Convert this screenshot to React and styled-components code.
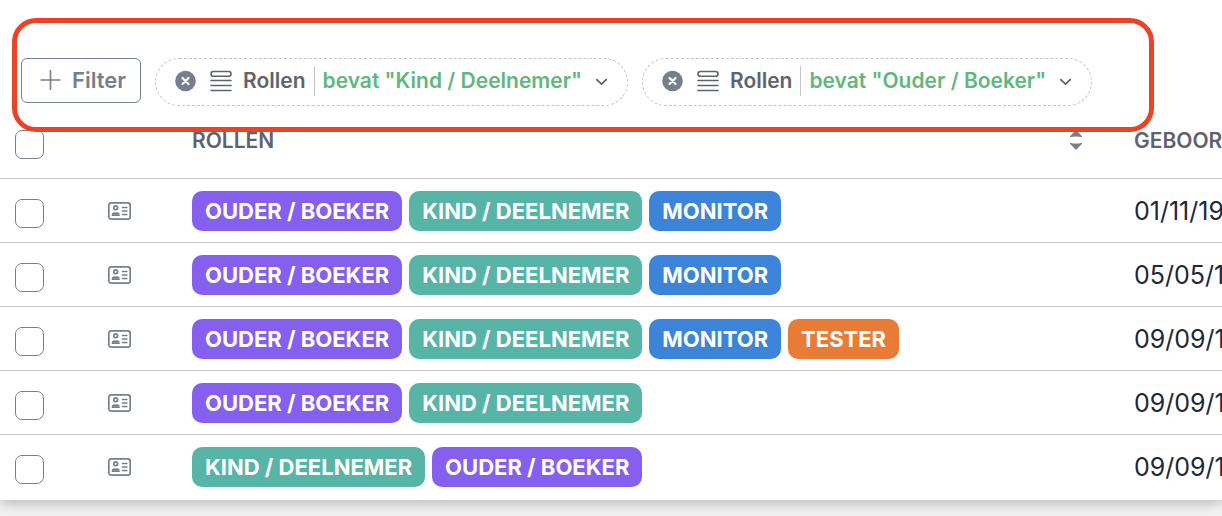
import React, { useState } from 'react';
import styled, { createGlobalStyle } from 'styled-components';

const GlobalStyle = createGlobalStyle`
  * {
    box-sizing: border-box;
  }

  body {
    margin: 0;
    min-height: 100vh;
    background-color: #f4f4f4;
    font-family: Inter, 'Liberation Sans', sans-serif;
  }

  button {
    font-family: inherit;
    background: none;
    border: none;
    padding: 0;
    cursor: pointer;
  }
`;

const Sheet = styled.main`
  position: relative;
  overflow: hidden;
  padding-bottom: 1px;
  background-color: white;
  box-shadow: 0 2px 14px rgba(0, 0, 0, 0.3);
`;

const Toolbar = styled.div`
  display: flex;
  align-items: flex-start;
  gap: 14px;
  padding: 58px 21px 0;
  white-space: nowrap;
`;

const FilterButton = styled.button`
  display: flex;
  align-items: center;
  gap: 10px;
  height: 45px;
  padding: 0 14px 1px 18px;
  border: 1px solid #787f8c;
  border-radius: 6px;
  color: #787f8c;
  font-size: 22px;
  font-weight: 600;
`;

const Pill = styled.div`
  display: flex;
  align-items: center;
  height: 48px;
  padding: 0 19px 2px;
  border: 1px dashed #c4c4c4;
  border-radius: 24px;
`;

const CloseButton = styled.button`
  display: flex;
  margin-right: 14px;
`;

const ConditionButton = styled.button`
  display: flex;
  align-items: center;
  height: 30px;
  color: #5f636d;
  font-size: 21px;
  font-weight: 600;
  line-height: 30px;
`;

const FieldName = styled.span`
  margin-left: 11px;
  padding-right: 8px;
`;

const Condition = styled.span`
  padding: 0 13px 0 8px;
  border-left: 1px solid #c4c4c4;
  color: #63b77c;
`;

// drawn on top of the toolbar
const Highlight = styled.div`
  position: absolute;
  top: 18px;
  left: 12px;
  right: 68px;
  height: 114px;
  border: 5px solid #ec4226;
  border-radius: 24px;
  pointer-events: none;
`;

const Table = styled.table`
  width: 100%;
  table-layout: fixed;
  border-collapse: separate;
  border-spacing: 0;
`;

const Column = styled.col`
  width: ${({ $width }) => $width};
`;

const HeaderCell = styled.th`
  height: 73px;
  padding: 0 0 ${({ $indent }) => ($indent ? '0' : '4px')} ${({ $indent }) => $indent || '0'};
  border-bottom: 1px solid #c8c8c8;
  color: #5f636d;
  font-size: 21px;
  font-weight: 600;
  text-align: left;
  white-space: nowrap;
`;

const HeaderContent = styled.div`
  display: flex;
  align-items: center;
  justify-content: space-between;
  padding-right: 51px;
`;

const Cell = styled.td`
  height: 64px;
  padding: 0 0 0 ${({ $indent }) => $indent || '0'};
  border-bottom: 1px solid #c8c8c8;
  color: #1f2738;
  font-size: 25px;
  white-space: nowrap;

  tr:last-child > & {
    border-bottom-color: white;
  }
`;

const Checkbox = styled.input.attrs({ type: 'checkbox' })`
  appearance: none;
  display: block;
  width: 29px;
  height: 29px;
  margin: 5px 0 0;
  border: 1px solid #787f8c;
  border-radius: 7px;
  background-color: white;

  &:checked {
    background-color: #8560ee;
  }
`;

const IconButton = styled.button`
  display: flex;
`;

const Tags = styled.div`
  display: flex;
  gap: 7px;
`;

const Tag = styled.span`
  height: 40px;
  padding: 0 13px;
  border-radius: 10px;
  background-color: ${({ $color }) => $color};
  color: white;
  font-size: 22px;
  font-weight: 700;
  line-height: 40px;
`;

const PlusIcon = () => (
  <svg width="22" height="22" viewBox="0 0 22 22" fill="none" stroke="#787f8c" strokeWidth="1.6" strokeLinecap="round">
    <path d="M10.5 1.500v19M1 11h19" />
  </svg>
);

const CloseIcon = () => (
  <svg width="21" height="22" viewBox="0 0 21 22">
    <circle cx="10.500" cy="11" r="10.300" fill="#787f8c" />
    <path d="M7.500 8l6 6M13.500 8l-6 6" stroke="white" strokeWidth="2.200" strokeLinecap="round" />
  </svg>
);

const StackIcon = () => (
  <svg width="22" height="22" viewBox="0 0 22 22" fill="none" stroke="#5f636d" strokeWidth="1.6" strokeLinecap="round">
    <rect x="1" y="1.500" width="20" height="4.700" rx="2.300" />
    <path d="M1 10.500h20M1 15.500h20M1 20.500h20" />
  </svg>
);

const ChevronIcon = () => (
  <svg width="13" height="12" viewBox="0 0 13 12" fill="none" stroke="#5f636d" strokeWidth="1.8" strokeLinecap="round" strokeLinejoin="round">
    <path d="M1.800 4.700L6.500 9.200l4.700-4.500" />
  </svg>
);

const SortIcon = () => (
  <svg width="14" height="20" viewBox="0 0 14 20" fill="#787f8c">
    <path d="M7 .5q.5 0 1 .6l4.800 5q.8 1-.2 1Q7 5.800 1.400 7.100q-1 0-.2-1l4.800-5Q6.500.5 7 .5z" />
    <path d="M7 19.500q.5 0 1-.6l4.800-5q.8-1-.2-1Q7 14.200 1.400 12.900q-1 0-.2 1l4.800 5q.5.6 1 .6z" />
  </svg>
);

const CardIcon = () => (
  <svg width="23" height="18" viewBox="0 0 23 18" fill="none" stroke="#787f8c" strokeWidth="1.7" strokeLinecap="round">
    <rect x=".8" y=".8" width="21.400" height="16.400" rx="2.500" />
    <circle cx="7.700" cy="5.800" r="1.900" />
    <path d="M4.500 13.200c0-1.600 1.200-2.200 2-2.200q1.200.6 2.400 0c.8 0 2 .6 2 2.200z" strokeLinejoin="round" />
    <path d="M14.500 5.500h4.300M14.500 9h4.300M14.500 12.500h4.300" />
  </svg>
);

const roles = {
  parent: { label: 'OUDER / BOEKER', color: '#8560ee' },
  child: { label: 'KIND / DEELNEMER', color: '#56b5a7' },
  monitor: { label: 'MONITOR', color: '#3c84d9' },
  tester: { label: 'TESTER', color: '#e87c37' },
};

const people = [
  { id: 1, roles: ['parent', 'child', 'monitor'], birthday: '01/11/19' },
  { id: 2, roles: ['parent', 'child', 'monitor'], birthday: '05/05/1' },
  { id: 3, roles: ['parent', 'child', 'monitor', 'tester'], birthday: '09/09/1' },
  { id: 4, roles: ['parent', 'child'], birthday: '09/09/1' },
  { id: 5, roles: ['child', 'parent'], birthday: '09/09/1' },
];

const App = () => {
  const [filters, setFilters] = useState(['Kind / Deelnemer', 'Ouder / Boeker']);
  const [selected, setSelected] = useState([]);

  const removeFilter = (value) => {
    setFilters(filters.filter((filter) => filter !== value));
  };

  const toggleRow = (id) => {
    setSelected(selected.includes(id) ? selected.filter((item) => item !== id) : [...selected, id]);
  };

  const toggleAll = () => {
    setSelected(selected.length === people.length ? [] : people.map((person) => person.id));
  };

  return (
    <>
      <GlobalStyle />
      <Sheet>
        <Toolbar>
          <FilterButton type="button">
            <PlusIcon />
            Filter
          </FilterButton>
          {filters.map((filter) => (
            <Pill key={filter}>
              <CloseButton type="button" aria-label="Verwijder filter" onClick={() => removeFilter(filter)}>
                <CloseIcon />
              </CloseButton>
              <ConditionButton type="button">
                <StackIcon />
                <FieldName>Rollen</FieldName>
                <Condition>{`bevat "${filter}"`}</Condition>
                <ChevronIcon />
              </ConditionButton>
            </Pill>
          ))}
        </Toolbar>

        <Table>
          <colgroup>
            <Column $width="108px" />
            <Column $width="84px" />
            <Column />
            <Column $width="88px" />
          </colgroup>
          <thead>
            <tr>
              <HeaderCell $indent="15px">
                <Checkbox aria-label="Selecteer alles" checked={selected.length === people.length} onChange={toggleAll} />
              </HeaderCell>
              <HeaderCell />
              <HeaderCell>
                <HeaderContent>
                  ROLLEN
                  <IconButton type="button" aria-label="Sorteer op rollen">
                    <SortIcon />
                  </IconButton>
                </HeaderContent>
              </HeaderCell>
              <HeaderCell>GEBOORTE</HeaderCell>
            </tr>
          </thead>
          <tbody>
            {people.map((person) => (
              <tr key={person.id}>
                <Cell $indent="15px">
                  <Checkbox aria-label="Selecteer rij" checked={selected.includes(person.id)} onChange={() => toggleRow(person.id)} />
                </Cell>
                <Cell>
                  <IconButton type="button" aria-label="Bekijk contact">
                    <CardIcon />
                  </IconButton>
                </Cell>
                <Cell>
                  <Tags>
                    {person.roles.map((role) => (
                      <Tag key={role} $color={roles[role].color}>{roles[role].label}</Tag>
                    ))}
                  </Tags>
                </Cell>
                <Cell>{person.birthday}</Cell>
              </tr>
            ))}
          </tbody>
        </Table>
        <Highlight />
      </Sheet>
    </>
  );
};

export default App;
